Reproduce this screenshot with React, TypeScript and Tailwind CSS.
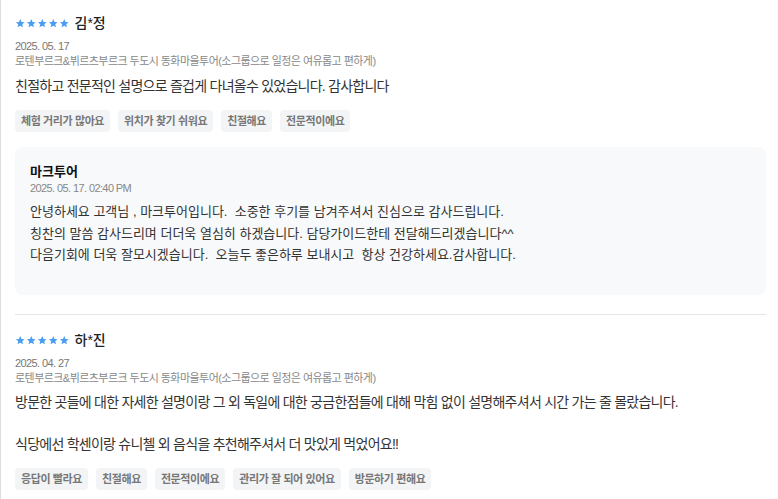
import React from "react";

const font = { fontFamily: '"Liberation Sans", "Noto Sans CJK KR", sans-serif' };

function Stars() {
  return (
    <div className="flex items-center gap-[0.5px]">
      {[0, 1, 2, 3, 4].map((i) => (
        <svg key={i} width="10.5" height="10.5" viewBox="0 0 24 24">
          <path
            d="M12 2l2.9 6.9 7.1.6-5.4 4.7 1.6 7.1L12 17.6 5.8 21.3l1.6-7.1L2 9.5l7.1-.6z"
            fill="#4a9df0"
          />
        </svg>
      ))}
    </div>
  );
}

function Tag({ children }: { children: React.ReactNode }) {
  return (
    <span className="inline-flex h-[22px] items-center rounded-[4px] bg-[#f3f4f6] px-[6px] text-[11px] font-bold tracking-[-0.4px] text-[#777]">
      {children}
    </span>
  );
}

function Review({
  name,
  date,
  body,
  tags,
  bodyClass,
}: {
  name: string;
  date: string;
  body: React.ReactNode;
  tags: string[];
  bodyClass: string;
}) {
  return (
    <div>
      <div className="flex h-[20px] items-center gap-[5px]">
        <Stars />
        <span className="text-[14px] font-medium text-[#222]">{name}</span>
      </div>
      <div className="mt-[6px] text-[11px] leading-[15px] tracking-[-0.6px] text-[#777]">{date}</div>
      <div className="text-[11px] leading-[15px] tracking-[-0.55px] text-[#888]">
        로텐부르크&뷔르츠부르크 두도시 동화마을투어(소그룹으로 일정은 여유롭고 편하게)
      </div>
      <div className={`${bodyClass} text-[14px] leading-[21px] tracking-[-0.75px] text-[#333]`}>{body}</div>
      <div className="mt-[13px] flex gap-[8px]">
        {tags.map((t) => (
          <Tag key={t}>{t}</Tag>
        ))}
      </div>
    </div>
  );
}

export default function App() {
  return (
    <div style={font} className="min-h-[499px] w-[778px] border-l border-[#dddddd] bg-white pl-[14px] pr-[12px] pt-[13px]">
      <Review
        name="김*정"
        date="2025. 05. 17"
        bodyClass="mt-[7px]"
        body="친절하고 전문적인 설명으로 즐겁게 다녀올수 있었습니다. 감사합니다"
        tags={["체험 거리가 많아요", "위치가 찾기 쉬워요", "친절해요", "전문적이에요"]}
      />
      <div className="mt-[15px] h-[148px] rounded-[8px] bg-[#f8f9fa] px-[15px] pt-[16px]">
        <div className="text-[13px] font-bold leading-[17px] text-[#111]">마크투어</div>
        <div className="mt-[1px] text-[11px] leading-[15px] tracking-[-0.6px] text-[#888]">
          2025. 05. 17. 02:40 PM
        </div>
        <div className="mt-[5px] text-[13px] leading-[21.5px] text-[#333]">
          안녕하세요 고객님 , 마크투어입니다.&nbsp; 소중한 후기를 남겨주셔서 진심으로 감사드립니다.
          <br />
          칭찬의 말씀 감사드리며 더더욱 열심히 하겠습니다. 담당가이드한테 전달해드리겠습니다^^
          <br />
          다음기회에 더욱 잘모시겠습니다.&nbsp; 오늘두 좋은하루 보내시고&nbsp; 항상 건강하세요.감사합니다.
        </div>
      </div>
      <div className="mt-[19px] h-px bg-[#e5e5e5]" />
      <div className="pt-[15px]">
        <Review
          name="하*진"
          date="2025. 04. 27"
          bodyClass="mt-[6px]"
          body={
            <>
              방문한 곳들에 대한 자세한 설명이랑 그 외 독일에 대한 궁금한점들에 대해 막힘 없이 설명해주셔서 시간 가는 줄 몰랐습니다.
              <br />
              <br />
              식당에선 학센이랑 슈니첼 외 음식을 추천해주셔서 더 맛있게 먹었어요!!
            </>
          }
          tags={["응답이 빨라요", "친절해요", "전문적이에요", "관리가 잘 되어 있어요", "방문하기 편해요"]}
        />
      </div>
    </div>
  );
}
